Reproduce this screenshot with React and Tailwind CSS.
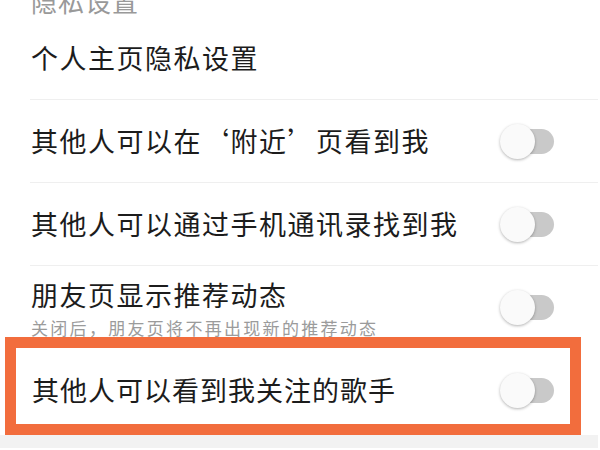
function Toggle() {
  return (
    <div className="relative w-[54px] h-[35px] shrink-0">
      <div className="absolute right-0 top-[5px] w-[36px] h-[25px] rounded-full bg-[#c9c9c9]" />
      <div className="absolute left-0 top-0 w-[35px] h-[35px] rounded-full bg-[#fafafa] shadow-[0_1px_3px_rgba(0,0,0,0.3)]" />
    </div>
  );
}

function Row({ title }) {
  return (
    <div className="ml-[30px] mr-[2px] h-[83px] border-b border-[#efefef] flex items-center justify-between pl-[1px] pr-[44px]">
      <span className="text-[27px] tracking-[1.5px] leading-[34px] text-[#1c1c1c]">{title}</span>
      <Toggle />
    </div>
  );
}

export default function App() {
  return (
    <div className="w-[600px] h-[450px] bg-white overflow-hidden font-['Noto_Sans_CJK_SC','Noto_Sans',sans-serif]">
      {/* section header, cut off at top */}
      <div className="h-[17px] pl-[31px] flex flex-col">
        <div className="-mt-[13px] text-[26px] leading-[28px] tracking-[1px] text-[#999]">隐私设置</div>
      </div>

      <div className="ml-[30px] mr-[2px] h-[83px] border-b border-[#efefef] flex items-center pl-[1px]">
        <span className="text-[27px] tracking-[1.5px] leading-[34px] text-[#1c1c1c]">个人主页隐私设置</span>
      </div>

      <Row title="其他人可以在‘附近’页看到我" />
      <Row title="其他人可以通过手机通讯录找到我" />

      <div className="ml-[30px] mr-[2px] h-[71px] flex justify-between pl-[1px] pr-[44px]">
        <div className="flex flex-col pt-[12px]">
          <span className="text-[27px] tracking-[1.5px] leading-[34px] text-[#1c1c1c]">朋友页显示推荐动态</span>
          <span className="mt-[6px] text-[17px] tracking-[2.3px] leading-[20px] text-[#9b9b9b]">关闭后，朋友页将不再出现新的推荐动态</span>
        </div>
        <div className="mt-[24px]">
          <Toggle />
        </div>
      </div>

      <div className="relative h-[98px] flex items-center justify-between pl-[32px] pr-[46px] pt-[8px]">
        <span className="text-[27px] tracking-[1px] leading-[34px] text-[#1c1c1c]">其他人可以看到我关注的歌手</span>
        <Toggle />
        {/* highlight annotation */}
        <div className="absolute left-[5px] top-0 w-[576px] h-[98px] border-[11px] border-[#f26d3d]" />
      </div>

      <div className="mr-[2px] h-[13px] bg-[#f2f2f2]" />
    </div>
  );
}
